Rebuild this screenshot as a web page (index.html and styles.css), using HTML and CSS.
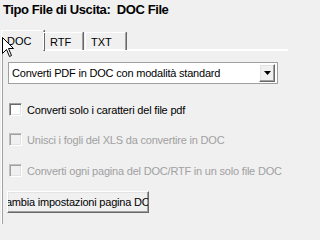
FILE: index.html
```html
<!DOCTYPE html>
<html>
<head>
<meta charset="utf-8">
<link rel="stylesheet" href="styles.css">
</head>
<body>
<div class="win">
  <div class="title">Tipo File di Uscita:&nbsp; DOC File</div>
  <div class="tabs">
    <div class="tab active">DOC</div>
    <div class="tab">RTF</div>
    <div class="tab">TXT</div>
  </div>
  <div class="panel">
    <div class="select">
      <span class="sel-text">Converti PDF in DOC con modalità standard</span>
      <span class="sel-btn"><svg width="7" height="4" viewBox="0 0 7 4"><path d="M0 0H7L3.5 4Z" fill="#000"/></svg></span>
    </div>
    <div class="check first"><span class="box"></span><span class="lbl">Converti solo i caratteri del file pdf</span></div>
    <div class="check disabled"><span class="box"></span><span class="lbl">Unisci i fogli del XLS da convertire in DOC</span></div>
    <div class="check disabled third"><span class="box"></span><span class="lbl">Converti ogni pagina del DOC/RTF in un solo file DOC</span></div>
    <div class="btn"><span>Cambia impostazioni pagina DOC</span></div>
  </div>
  <svg class="cursor" width="13" height="21" viewBox="0 0 13 21"><path d="M0.5 0.5V16.5L4.5 12.5L7.5 19.5L9.5 18.5L6.5 11.5H11.5Z" fill="#fff" stroke="#000" stroke-width="1" stroke-linejoin="miter"/></svg>
</div>
</body>
</html>
```
FILE: styles.css
```css
html, body {
  margin: 0;
  padding: 0;
  background: #f0f0f0;
}
.win {
  position: relative;
  width: 288px;
  height: 224px;
  overflow: hidden;
  font-family: "Liberation Sans", Arial, sans-serif;
  font-size: 11px;
  letter-spacing: -0.2px;
  color: #000;
}
.title {
  padding: 2px 0 0 3px;
  font-weight: bold;
  font-size: 13px;
  letter-spacing: -0.4px;
  line-height: 15px;
  height: 30px;
  box-sizing: border-box;
}
.tabs {
  display: flex;
  align-items: flex-end;
  height: 20px;
  padding-left: 1px;
  position: relative;
  z-index: 2;
}
.tab {
  box-sizing: border-box;
  height: 18px;
  padding: 3px 0 0 6px;
  line-height: 13px;
  border-top: 1px solid #fff;
  border-left: 1px solid #fff;
  border-right: 1px solid #a0a0a0;
  box-shadow: 1px 0 0 #696969;
  letter-spacing: 0;
  margin-right: 1px;
}
.tab:nth-child(2) { width: 40px; }
.tab:nth-child(3) { width: 41px; margin-left: 1px; padding-left: 5px; }
.tab.active {
  width: 43px;
  height: 21px;
  margin-bottom: -1px;
  padding: 4px 0 0 5px;
  background: #f0f0f0;
  margin-right: -1px;
}
.panel {
  margin-left: 2px;
  border-top: 1px solid #fff;
  border-left: 1px solid #a0a0a0;
  box-shadow: 0 -1px 0 #fff, -1px 0 0 #fff;
  padding: 11px 0 0 4px;
  height: 200px;
  position: relative;
  z-index: 1;
}
.select {
  margin-left: 1px;
  width: 270px;
  height: 22px;
  box-sizing: border-box;
  border: 1px solid #a0a0a0;
  background: #fff;
  display: flex;
  align-items: center;
  justify-content: space-between;
  padding: 1px;
}
.sel-text {
  padding-left: 2px;
}
.sel-btn {
  box-sizing: border-box;
  width: 16px;
  height: 18px;
  background: #f0f0f0;
  border: 1px solid;
  border-color: #fff #696969 #696969 #fff;
  box-shadow: inset -1px -1px 0 #a0a0a0, inset 1px 1px 0 #e3e3e3;
  display: flex;
  align-items: center;
  justify-content: center;
  margin-right: 1px;
}
.check {
  display: flex;
  align-items: center;
  height: 13px;
  margin-left: 2px;
  margin-top: 17px;
  white-space: nowrap;
}
.check.first { margin-top: 19px; }
.check.third { margin-top: 18px; }
.box {
  box-sizing: border-box;
  width: 13px;
  height: 13px;
  border: 1px solid;
  border-color: #a0a0a0 #fff #fff #a0a0a0;
  box-shadow: inset 1px 1px 0 #696969, inset -1px -1px 0 #e3e3e3;
  background: #fff;
  margin-right: 5px;
  flex: none;
}
.check.disabled { color: #a0a0a0; }
.check.disabled .box {
  background: #f0f0f0;
  border-color: #c0c0c0 #fff #fff #c0c0c0;
  box-shadow: inset 1px 1px 0 #a0a0a0, inset -1px -1px 0 #e3e3e3;
}
.btn {
  margin-top: 14px;
  width: 142px;
  height: 22px;
  box-sizing: border-box;
  border: 1px solid;
  border-color: #fff #696969 #696969 #fff;
  box-shadow: inset -1px -1px 0 #a0a0a0, inset 1px 1px 0 #e3e3e3;
  display: flex;
  justify-content: center;
  align-items: center;
  overflow: hidden;
  white-space: nowrap;
}
.btn span { flex: none; }
.cursor {
  position: absolute;
  left: 2px;
  top: 37px;
  z-index: 5;
}
```
